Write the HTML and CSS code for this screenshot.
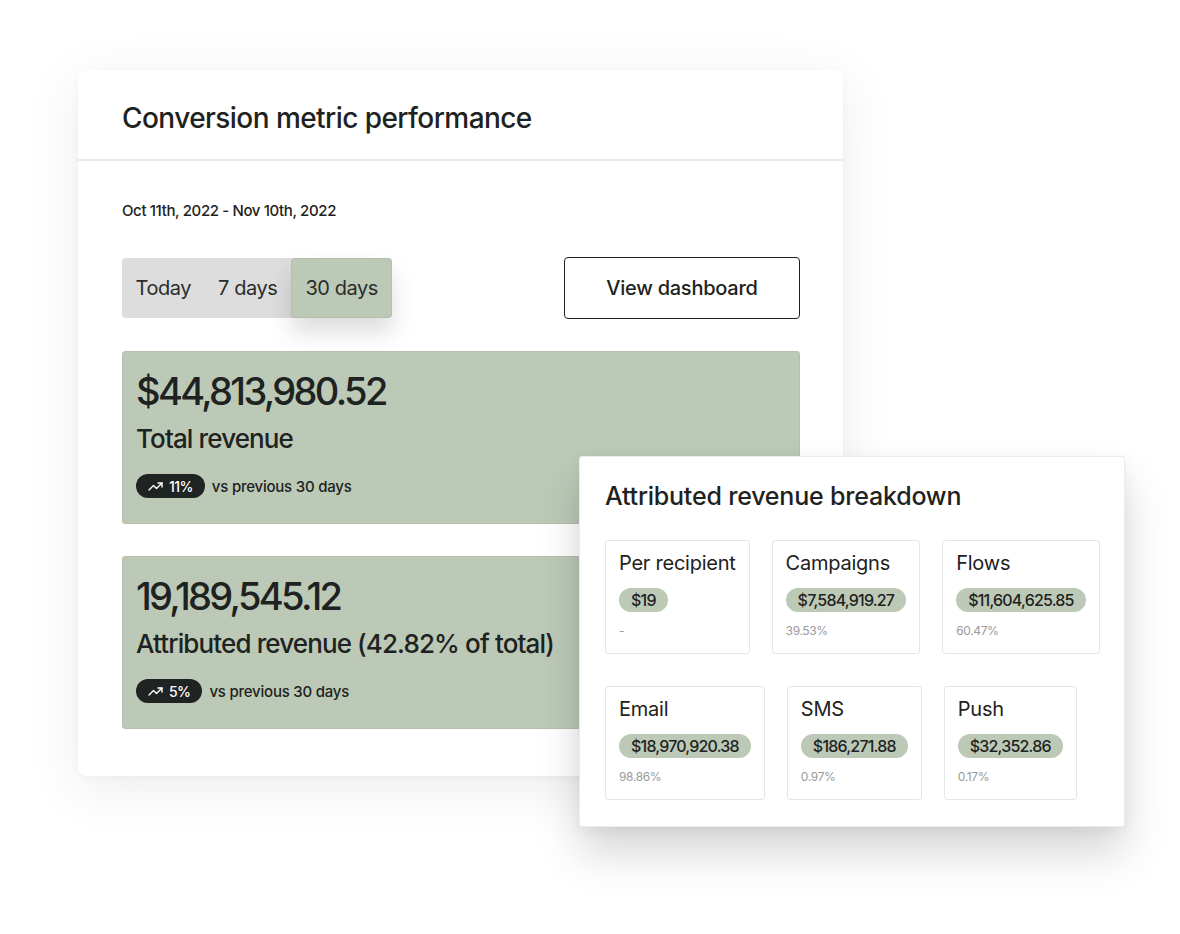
FILE: index.html
```html
<!DOCTYPE html>
<html lang="en">
<head>
<meta charset="utf-8">
<title>Conversion metric performance</title>
<link rel="stylesheet" href="styles.css">
</head>
<body>
<div class="stage">
  <section class="card main">
    <header class="main-head">
      <h1 class="main-title">Conversion metric performance</h1>
    </header>
    <div class="main-body">
      <p class="date">Oct 11th, 2022 - Nov 10th, 2022</p>
      <div class="controls">
        <div class="toggle">
          <span class="seg">Today</span>
          <span class="seg">7 days</span>
          <span class="seg active">30 days</span>
        </div>
        <button class="btn" type="button">View dashboard</button>
      </div>
      <div class="metric">
        <div class="amount">$44,813,980.52</div>
        <div class="label">Total revenue</div>
        <div class="trend-row">
          <span class="trend"><svg class="trend-icon" viewBox="0 0 16 10" width="16" height="10" aria-hidden="true"><polyline points="1,9 5.5,4.5 8.5,7.5 14,2" fill="none" stroke="#fff" stroke-width="1.4" stroke-linecap="round" stroke-linejoin="round"/><polyline points="10,2 14,2 14,6" fill="none" stroke="#fff" stroke-width="1.4" stroke-linecap="round" stroke-linejoin="round"/></svg>11%</span>
          <span class="trend-note">vs previous 30 days</span>
        </div>
      </div>
      <div class="metric">
        <div class="amount">19,189,545.12</div>
        <div class="label">Attributed revenue (42.82% of total)</div>
        <div class="trend-row">
          <span class="trend"><svg class="trend-icon" viewBox="0 0 16 10" width="16" height="10" aria-hidden="true"><polyline points="1,9 5.5,4.5 8.5,7.5 14,2" fill="none" stroke="#fff" stroke-width="1.4" stroke-linecap="round" stroke-linejoin="round"/><polyline points="10,2 14,2 14,6" fill="none" stroke="#fff" stroke-width="1.4" stroke-linecap="round" stroke-linejoin="round"/></svg>5%</span>
          <span class="trend-note">vs previous 30 days</span>
        </div>
      </div>
    </div>
  </section>

  <section class="breakdown">
    <h2 class="bd-title">Attributed revenue breakdown</h2>
    <div class="bd-row">
      <div class="tile">
        <div class="tile-name">Per recipient</div>
        <span class="pill">$19</span>
        <div class="tile-pct">-</div>
      </div>
      <div class="tile">
        <div class="tile-name">Campaigns</div>
        <span class="pill">$7,584,919.27</span>
        <div class="tile-pct">39.53%</div>
      </div>
      <div class="tile">
        <div class="tile-name">Flows</div>
        <span class="pill">$11,604,625.85</span>
        <div class="tile-pct">60.47%</div>
      </div>
    </div>
    <div class="bd-row">
      <div class="tile">
        <div class="tile-name">Email</div>
        <span class="pill">$18,970,920.38</span>
        <div class="tile-pct">98.86%</div>
      </div>
      <div class="tile">
        <div class="tile-name">SMS</div>
        <span class="pill">$186,271.88</span>
        <div class="tile-pct">0.97%</div>
      </div>
      <div class="tile">
        <div class="tile-name">Push</div>
        <span class="pill">$32,352.86</span>
        <div class="tile-pct">0.17%</div>
      </div>
    </div>
  </section>
</div>
</body>
</html>
```

FILE: styles.css
```css
* { box-sizing: border-box; }

html, body {
  margin: 0;
  padding: 0;
  background: #ffffff;
}

body {
  font-family: "Inter", "Roboto", "Liberation Sans", sans-serif;
  color: #1e2220;
  width: 1180px;
  height: 934px;
  overflow: hidden;
}

.stage {
  position: relative;
  padding: 70px 0 0 78px;
  height: 934px;
}

.card.main {
  width: 765px;
  background: #ffffff;
  border-radius: 8px;
  box-shadow: 0 12px 55px rgba(0, 0, 0, 0.08), 0 2px 8px rgba(0, 0, 0, 0.03);
}

.main-head {
  height: 91px;
  padding: 6px 44px 0;
  display: flex;
  align-items: center;
  border-bottom: 2px solid #ebebeb;
}

.main-title {
  margin: 0;
  font-size: 28px;
  line-height: 34px;
  font-weight: 500;
  letter-spacing: -0.02em;
}

.main-body {
  padding: 40px 43px 47px 44px;
}

.date {
  margin: 0;
  font-size: 15px;
  line-height: 20px;
  font-weight: 500;
  letter-spacing: -0.025em;
}

.controls {
  margin-top: 36px;
  display: flex;
  align-items: center;
  justify-content: space-between;
}

.toggle {
  display: flex;
  height: 60px;
  background: #dddddd;
  border-radius: 4px;
}

.seg {
  display: flex;
  align-items: center;
  padding: 0 13.5px;
  font-size: 20px;
  letter-spacing: -0.022em;
  color: #2a2d2b;
  border-radius: 4px;
}

.seg.active {
  background: #bcc9b7;
  border: 1px solid #b1bfac;
  box-shadow: 0 14px 24px rgba(0, 0, 0, 0.14);
}

.btn {
  width: 236px;
  height: 62px;
  background: #ffffff;
  border: 1.5px solid #1e2220;
  border-radius: 4px;
  font-family: inherit;
  font-size: 20px;
  font-weight: 500;
  letter-spacing: -0.012em;
  color: #1e2220;
}

.metric {
  margin-top: 32px;
  background: #bcc9b7;
  border: 1px solid #b3c0ae;
  border-radius: 3px;
  padding: 17px 13px 25px;
}

.amount {
  font-size: 38px;
  line-height: 44px;
  font-weight: 500;
  letter-spacing: -0.07em;
}

.label {
  margin-top: 10px;
  font-size: 26px;
  line-height: 31px;
  font-weight: 500;
  letter-spacing: -0.034em;
}

.trend-row {
  margin-top: 20px;
  display: flex;
  align-items: center;
  gap: 7px;
}

.trend {
  display: inline-flex;
  align-items: center;
  gap: 5px;
  height: 24px;
  padding: 0 12px;
  background: #1f2321;
  color: #ffffff;
  border-radius: 12px;
  font-size: 14px;
  font-weight: 500;
  letter-spacing: -0.04em;
}

.trend-icon {
  display: block;
}

.trend-note {
  font-size: 15px;
  font-weight: 500;
  letter-spacing: -0.015em;
}

.breakdown {
  position: absolute;
  left: 579px;
  top: 456px;
  width: 546px;
  background: #ffffff;
  border: 1px solid #ececec;
  border-radius: 3px;
  padding: 24px 25px 26px;
  box-shadow: 0 26px 44px rgba(0, 0, 0, 0.16), 0 4px 14px rgba(0, 0, 0, 0.05);
}

.bd-title {
  margin: 0;
  font-size: 25px;
  line-height: 30px;
  font-weight: 500;
  letter-spacing: -0.008em;
}

.bd-row {
  display: flex;
  gap: 22px;
  margin-top: 32px;
}

.bd-row:first-of-type {
  margin-top: 29px;
}

.tile {
  height: 114px;
  padding: 10px 13px 14px;
  border: 1px solid #e6e6e6;
  border-radius: 3px;
  display: flex;
  flex-direction: column;
  align-items: flex-start;
}

.tile-name {
  font-size: 20px;
  line-height: 24px;
  font-weight: 400;
  letter-spacing: -0.012em;
  white-space: nowrap;
}

.pill {
  margin-top: 13px;
  height: 26px;
  padding: 0 12px;
  display: inline-flex;
  align-items: center;
  background: #bcc9b7;
  border-radius: 13px;
  font-size: 16px;
  font-weight: 500;
  letter-spacing: -0.05em;
  white-space: nowrap;
}

.tile-pct {
  margin-top: 11px;
  font-size: 12px;
  line-height: 16px;
  color: #9a9a9a;
  letter-spacing: -0.03em;
}
```
